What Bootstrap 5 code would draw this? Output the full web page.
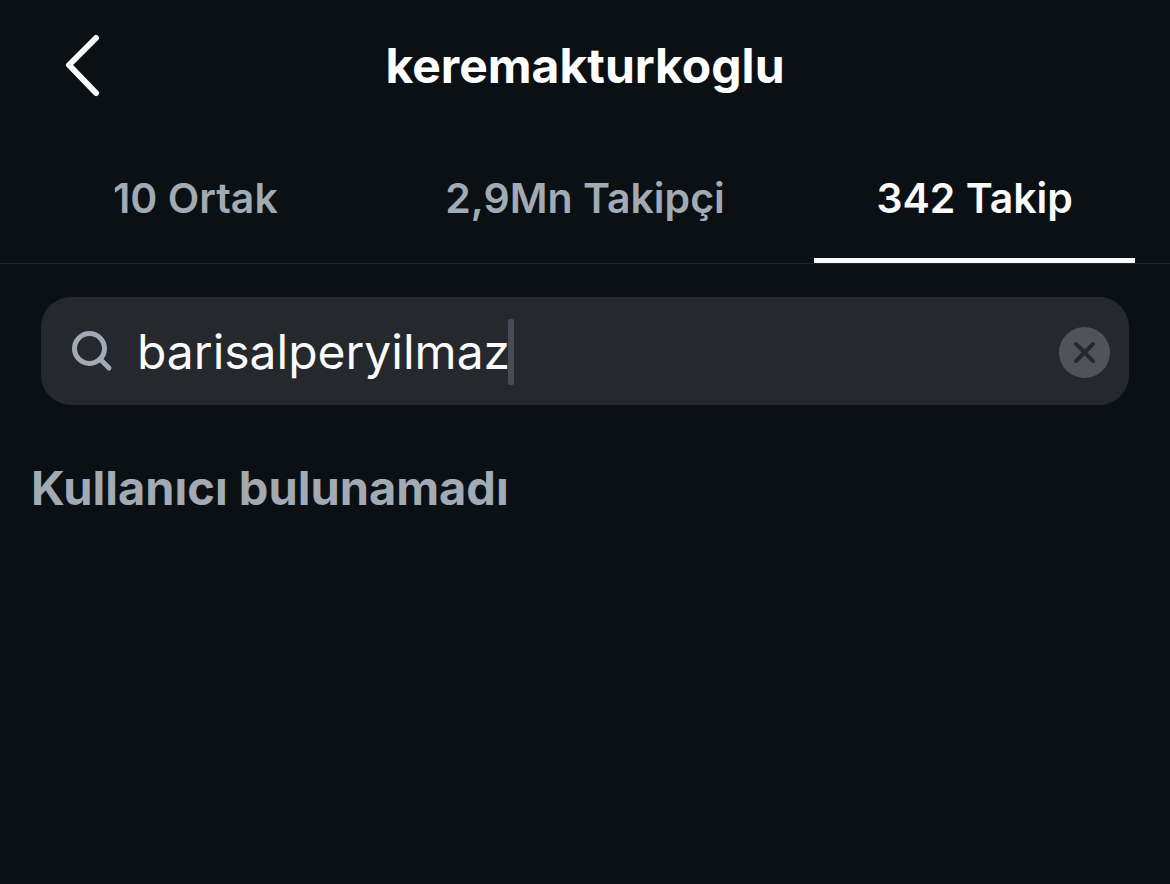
<!DOCTYPE html>
<html lang="tr" data-bs-theme="dark">
<head>
<meta charset="utf-8">
<meta name="viewport" content="width=device-width, initial-scale=1">
<title>keremakturkoglu</title>
<link href="https://cdn.jsdelivr.net/npm/bootstrap@5.3.0/dist/css/bootstrap.min.css" rel="stylesheet">
<style>
  body { background: #0b1014; color: #fafafa; font-family: Inter, sans-serif; }
  .topbar { height: 132px; padding: 0 64px; }
  .back { width: 36px; height: 64px; margin-bottom: 2px; }
  .account { font-size: 48px; line-height: 56px; font-weight: 700; }
  .side { flex: 1 0 0; }
  .tabs { height: 132px; padding: 0 35px; gap: 69px; border-bottom: 1px solid #23272b; }
  .tabs a { flex: 1 1 0; color: #a2aab4; font-size: 41px; line-height: 50px; font-weight: 600; padding-top: 41px; border-bottom: 5px solid transparent; white-space: nowrap; }
  .tabs a.active { color: #fafafa; border-color: #fafafa; }
  .search { height: 108px; margin: 33px 41px 0; padding: 2px 19px 0 30px; background: #25282d; border-radius: 30px; }
  .query { font-size: 48px; line-height: 60px; color: #fafafa; }
  .query:focus { color: #fafafa; }
  .caret { left: 371px; width: 6px; height: 66px; border-radius: 2px; background: #454a54; }
  .clear { width: 51px; height: 51px; }
  .empty { font-size: 47px; line-height: 56px; font-weight: 700; color: #a2aab4; margin: 55px 31px 0; }
</style>
</head>
<body>
<header class="topbar d-flex align-items-center">
  <div class="side">
    <button type="button" class="back btn p-0 border-0 d-block" aria-label="Geri">
      <svg class="d-block" width="36" height="64" viewBox="0 0 36 64" fill="none" stroke="#fafafa" stroke-width="6" stroke-linecap="round" stroke-linejoin="round"><path d="M32 5 5 32l27 28"/></svg>
    </button>
  </div>
  <h1 class="account m-0">keremakturkoglu</h1>
  <div class="side"></div>
</header>
<nav class="tabs d-flex">
  <a href="#" class="text-center text-decoration-none">10 Ortak</a>
  <a href="#" class="text-center text-decoration-none">2,9Mn Takipçi</a>
  <a href="#" class="active text-center text-decoration-none" aria-current="page">342 Takip</a>
</nav>
<main>
  <form class="search d-flex align-items-center">
    <label for="q" aria-label="Ara"><svg class="d-block" width="42" height="42" viewBox="0 0 42 42" fill="none" stroke="#a2aab4" stroke-width="5" stroke-linecap="round"><circle cx="18.500" cy="17.500" r="15"/><path d="m29 28 9 9"/></svg></label>
    <div class="position-relative d-flex align-items-center flex-grow-1 ms-4">
      <input id="q" type="text" class="query form-control bg-transparent border-0 rounded-0 shadow-none p-0" value="barisalperyilmaz">
      <span class="caret position-absolute"></span>
    </div>
    <button type="button" class="clear btn p-0 border-0" aria-label="Temizle"><svg class="d-block" width="51" height="51" viewBox="0 0 51 51"><circle cx="25.500" cy="25.500" r="25.500" fill="#505358"/><path d="m17 17 17 17m0-17L17 34" stroke="#25282d" stroke-width="4" stroke-linecap="round"/></svg></button>
  </form>
  <p class="empty">Kullanıcı bulunamadı</p>
</main>
<script src="https://cdn.jsdelivr.net/npm/bootstrap@5.3.0/dist/js/bootstrap.bundle.min.js"></script>
</body>
</html>
